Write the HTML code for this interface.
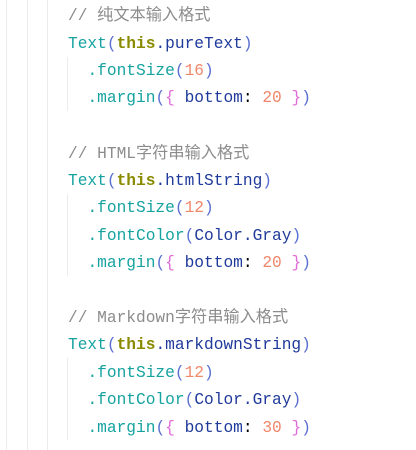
<html><head><style>
body{margin:0;background:#fff;width:416px;height:450px;overflow:hidden;position:relative;font-family:"Liberation Mono","Noto Sans CJK SC",monospace;font-size:16.2px}
.g{position:absolute;width:1px;background:#ececec}
.l{position:absolute;left:68px;white-space:pre;line-height:20px}
.c{color:#8c8c8c}.t{color:#16a3a0}.k{color:#8a8a00;font-weight:bold}.i{color:#1f3a9a}.n{color:#f0876a}.b{color:#e06ad6}.p{color:#5a6fd0}
</style></head><body>
<div class="g" style="left:6px;top:0;height:450px"></div>
<div class="g" style="left:27px;top:0;height:450px"></div>
<div class="g" style="left:47px;top:0;height:450px"></div>
<div class="g" style="left:67px;top:57px;height:54px"></div>
<div class="g" style="left:67px;top:194px;height:82px"></div>
<div class="g" style="left:67px;top:358px;height:82px"></div>
<div class="l c" style="top:6px">// 纯文本输入格式</div>
<div class="l" style="top:34px"><span class="t">Text</span><span class="p">(</span><span class="k">this</span><span class="i">.pureText</span><span class="p">)</span></div>
<div class="l" style="top:61px">  <span class="t">.fontSize</span><span class="p">(</span><span class="n">16</span><span class="p">)</span></div>
<div class="l" style="top:88px">  <span class="t">.margin</span><span class="p">(</span><span class="b">{</span> <span class="i">bottom</span>: <span class="n">20</span> <span class="b">}</span><span class="p">)</span></div>
<div class="l c" style="top:144px">// HTML字符串输入格式</div>
<div class="l" style="top:171px"><span class="t">Text</span><span class="p">(</span><span class="k">this</span><span class="i">.htmlString</span><span class="p">)</span></div>
<div class="l" style="top:198px">  <span class="t">.fontSize</span><span class="p">(</span><span class="n">12</span><span class="p">)</span></div>
<div class="l" style="top:226px">  <span class="t">.fontColor</span><span class="p">(</span><span class="i">Color.Gray</span><span class="p">)</span></div>
<div class="l" style="top:253px">  <span class="t">.margin</span><span class="p">(</span><span class="b">{</span> <span class="i">bottom</span>: <span class="n">20</span> <span class="b">}</span><span class="p">)</span></div>
<div class="l c" style="top:308px">// Markdown字符串输入格式</div>
<div class="l" style="top:335px"><span class="t">Text</span><span class="p">(</span><span class="k">this</span><span class="i">.markdownString</span><span class="p">)</span></div>
<div class="l" style="top:363px">  <span class="t">.fontSize</span><span class="p">(</span><span class="n">12</span><span class="p">)</span></div>
<div class="l" style="top:390px">  <span class="t">.fontColor</span><span class="p">(</span><span class="i">Color.Gray</span><span class="p">)</span></div>
<div class="l" style="top:418px">  <span class="t">.margin</span><span class="p">(</span><span class="b">{</span> <span class="i">bottom</span>: <span class="n">30</span> <span class="b">}</span><span class="p">)</span></div>
</body></html>
